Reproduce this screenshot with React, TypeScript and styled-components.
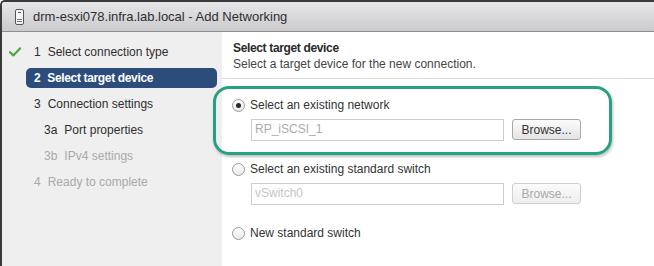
import React from 'react';
import styled, { createGlobalStyle } from 'styled-components';

const GlobalStyle = createGlobalStyle`
  html, body {
    margin: 0;
    padding: 0;
    background: #ffffff;
  }
  body {
    font-family: 'Liberation Sans', Arial, sans-serif;
  }
`;

type Step = {
  num: string;
  label: string;
  done?: boolean;
  active?: boolean;
  disabled?: boolean;
  sub?: boolean;
};

const steps: Step[] = [
  { num: '1', label: 'Select connection type', done: true },
  { num: '2', label: 'Select target device', active: true },
  { num: '3', label: 'Connection settings' },
  { num: '3a', label: 'Port properties', sub: true },
  { num: '3b', label: 'IPv4 settings', sub: true, disabled: true },
  { num: '4', label: 'Ready to complete', disabled: true },
];

const HostIcon = () => (
  <svg width="9" height="16" viewBox="0 0 9 16">
    <rect x="0.5" y="0.5" width="8" height="15" rx="1.5" fill="#f4f4f4" stroke="#555" />
    <line x1="3" y1="3.5" x2="6" y2="3.5" stroke="#555" />
    <line x1="2" y1="10.5" x2="7" y2="10.5" stroke="#777" />
    <line x1="2" y1="12.5" x2="7" y2="12.5" stroke="#777" />
  </svg>
);

const CheckIcon = () => (
  <svg width="12" height="10" viewBox="0 0 12 10">
    <path d="M1 5.2 L4.3 8.4 L11 1.4" fill="none" stroke="#4ca53f" strokeWidth="2.2" strokeLinecap="round" strokeLinejoin="round" />
  </svg>
);

const ChoiceGroup: React.FC<{
  label: string;
  checked?: boolean;
  value?: string;
  disabled?: boolean;
  first?: boolean;
  showField?: boolean;
}> = ({ label, checked, value, disabled, first, showField = true }) => (
  <StyledChoice first={first}>
    <StyledRadioRow>
      <StyledRadio checked={checked} />
      <span>{label}</span>
    </StyledRadioRow>
    {showField && (
      <StyledFieldRow>
        <StyledInput dim={disabled}>{value}</StyledInput>
        <StyledButton disabled={disabled}>Browse...</StyledButton>
      </StyledFieldRow>
    )}
  </StyledChoice>
);

const App: React.FC = () => {
  return (
    <>
      <GlobalStyle />
      <StyledWindow>
        <StyledTitleBar>
          <HostIcon />
          <span>drm-esxi078.infra.lab.local - Add Networking</span>
        </StyledTitleBar>
        <StyledBody>
          <StyledSidebar>
            {steps.map((s) => (
              <StyledStepRow key={s.num}>
                <StyledCheckCell>{s.done && <CheckIcon />}</StyledCheckCell>
                <StyledStep active={s.active} disabled={s.disabled} sub={s.sub}>
                  <span className="num">{s.num}</span>
                  <span>{s.label}</span>
                </StyledStep>
              </StyledStepRow>
            ))}
          </StyledSidebar>
          <StyledContent>
            <StyledHeader>
              <StyledHeading>Select target device</StyledHeading>
              <StyledDescription>Select a target device for the new connection.</StyledDescription>
            </StyledHeader>
            <StyledDivider />
            <StyledOptions>
              <ChoiceGroup first checked label="Select an existing network" value="RP_iSCSI_1" />
              <ChoiceGroup disabled label="Select an existing standard switch" value="vSwitch0" />
              <ChoiceGroup label="New standard switch" showField={false} />
            </StyledOptions>
          </StyledContent>
          <StyledHighlight />
        </StyledBody>
      </StyledWindow>
    </>
  );
};

const StyledWindow = styled.div`
  width: 660px;
  height: 266px;
  overflow: hidden;
  box-sizing: border-box;
  border-top: 2px solid #3a3a3a;
  border-left: 2px solid #3a3a3a;
  border-top-left-radius: 5px;
  background: #ffffff;
`;

const StyledTitleBar = styled.div`
  height: 29px;
  display: flex;
  align-items: center;
  gap: 9px;
  padding-left: 13px;
  background: linear-gradient(to bottom, #e6e6e8, #cbcbce);
  border-bottom: 1px solid #8f8f8f;
  font-size: 13px;
  color: #2e2e2e;
  svg {
    margin-top: 1px;
  }
`;

const StyledBody = styled.div`
  position: relative;
  display: flex;
  height: 234px;
`;

const StyledSidebar = styled.div`
  width: 220px;
  flex-shrink: 0;
  background: #efefef;
  padding-top: 7px;
  box-sizing: border-box;
`;

const StyledStepRow = styled.div`
  display: flex;
  align-items: center;
  height: 26px;
`;

const StyledCheckCell = styled.div`
  width: 23px;
  display: flex;
  justify-content: center;
  align-items: center;
  padding-left: 1px;
`;

const StyledStep = styled.div<{ active?: boolean; disabled?: boolean; sub?: boolean }>`
  flex: 1;
  margin-right: 5px;
  height: 20px;
  display: flex;
  align-items: center;
  padding-left: ${({ sub }) => (sub ? '18px' : '8px')};
  border-radius: 5px;
  font-size: 12px;
  background: ${({ active }) => (active ? '#2c4d7c' : 'transparent')};
  color: ${({ active, disabled }) => (active ? '#ffffff' : disabled ? '#a9a9a9' : '#2e2e2e')};
  font-weight: ${({ active }) => (active ? 'bold' : 'normal')};
  letter-spacing: ${({ active }) => (active ? '-0.35px' : '0')};
  .num {
    margin-right: 7px;
  }
`;

const StyledContent = styled.div`
  flex: 1;
  background: #ffffff;
`;

const StyledHeader = styled.div`
  padding: 8px 11px 0;
`;

const StyledHeading = styled.div`
  font-size: 12px;
  line-height: 16px;
  font-weight: bold;
  letter-spacing: -0.35px;
  color: #2a2a2a;
`;

const StyledDescription = styled.div`
  font-size: 12px;
  line-height: 16px;
  color: #444444;
`;

const StyledDivider = styled.div`
  margin-top: 6px;
  height: 1px;
  background: #dcdcdc;
`;

const StyledOptions = styled.div`
  padding-left: 10px;
`;

const StyledChoice = styled.div<{ first?: boolean }>`
  margin-top: ${({ first }) => (first ? '18px' : '20px')};
`;

const StyledRadioRow = styled.div`
  display: flex;
  align-items: center;
  height: 16px;
  gap: 5px;
  font-size: 12px;
  color: #333333;
`;

const StyledRadio = styled.span<{ checked?: boolean }>`
  width: 13px;
  height: 13px;
  box-sizing: border-box;
  border-radius: 50%;
  border: 1px solid #9a9a9a;
  background: linear-gradient(to bottom, #ffffff, #e9e9e9);
  display: flex;
  align-items: center;
  justify-content: center;
  &::after {
    content: '';
    display: ${({ checked }) => (checked ? 'block' : 'none')};
    width: 5px;
    height: 5px;
    border-radius: 50%;
    background: #2a2a2a;
  }
`;

const StyledFieldRow = styled.div`
  display: flex;
  align-items: flex-start;
  gap: 8px;
  margin-top: 6px;
  padding-left: 19px;
`;

const StyledInput = styled.div<{ dim?: boolean }>`
  width: 253px;
  height: 22px;
  box-sizing: border-box;
  border: 1px solid #cccccc;
  padding: 0 3px;
  font-size: 12px;
  line-height: 19px;
  color: ${({ dim }) => (dim ? '#c6c6c6' : '#ababab')};
`;

const StyledButton = styled.button`
  width: 69px;
  height: 21px;
  box-sizing: border-box;
  border: 1px solid #a9a9a9;
  border-radius: 3px;
  background: linear-gradient(to bottom, #fbfbfb, #e4e4e4);
  font-family: 'Liberation Sans', Arial, sans-serif;
  font-size: 12px;
  color: #333333;
  padding: 0;
  &:disabled {
    border-color: #cfcfcf;
    color: #a8a8a8;
    background: linear-gradient(to bottom, #fbfbfb, #eeeeee);
  }
`;

const StyledHighlight = styled.div`
  position: absolute;
  left: 211px;
  top: 54px;
  width: 399px;
  height: 69px;
  box-sizing: border-box;
  border: 3px solid #27a083;
  border-radius: 16px;
  box-shadow: 1px 2px 3px rgba(0, 0, 0, 0.25);
  pointer-events: none;
`;

export default App;
